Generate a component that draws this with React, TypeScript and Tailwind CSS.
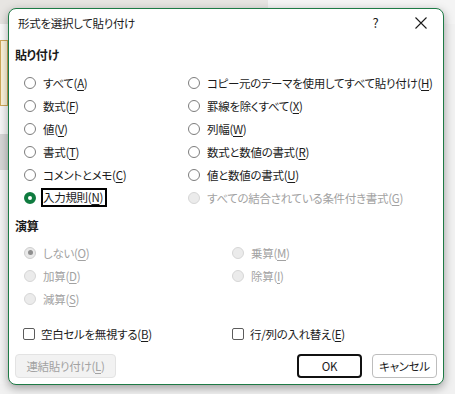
import React from 'react';

type RadioState = 'normal' | 'checked' | 'disabled' | 'disabledChecked';

type Opt = { text: string; k: string; state?: RadioState; focus?: boolean };

const Radio: React.FC<{ state: RadioState }> = ({ state }) => {
  if (state === 'checked') {
    return <span className="w-[12px] h-[12px] shrink-0 rounded-full border-[4px] border-[#0f7b3f] bg-white" />;
  }
  if (state === 'disabledChecked') {
    return (
      <span className="w-[12px] h-[12px] shrink-0 rounded-full border border-[#cfcfcf] bg-[#e9e9e9] flex items-center justify-center">
        <span className="w-[5px] h-[5px] rounded-full bg-[#8e8e8e]" />
      </span>
    );
  }
  if (state === 'disabled') {
    return <span className="w-[12px] h-[12px] shrink-0 rounded-full border border-[#d6d6d6] bg-[#ebebeb]" />;
  }
  return <span className="w-[12px] h-[12px] shrink-0 rounded-full border border-[#7d7d7d] bg-white" />;
};

const Label: React.FC<{ text: string; k: string }> = ({ text, k }) => (
  <>
    {text}(<span className="underline underline-offset-[2px]">{k}</span>)
  </>
);

const RadioRow: React.FC<{ opt: Opt }> = ({ opt }) => {
  const state = opt.state || 'normal';
  const disabled = state === 'disabled' || state === 'disabledChecked';
  return (
    <div className="flex items-center h-[23px]">
      <Radio state={state} />
      {opt.focus ? (
        <span className="ml-[5px] border-2 border-black pr-[2px] leading-[15px] text-[#1b1b1b]">
          <Label text={opt.text} k={opt.k} />
        </span>
      ) : (
        <span className={'ml-[7px] leading-[16px] whitespace-nowrap ' + (disabled ? 'text-[#a2a2a2]' : 'text-[#1b1b1b]')}>
          <Label text={opt.text} k={opt.k} />
        </span>
      )}
    </div>
  );
};

const pasteLeft: Opt[] = [
  { text: 'すべて', k: 'A' },
  { text: '数式', k: 'F' },
  { text: '値', k: 'V' },
  { text: '書式', k: 'T' },
  { text: 'コメントとメモ', k: 'C' },
  { text: '入力規則', k: 'N', state: 'checked', focus: true },
];

const pasteRight: Opt[] = [
  { text: 'コピー元のテーマを使用してすべて貼り付け', k: 'H' },
  { text: '罫線を除くすべて', k: 'X' },
  { text: '列幅', k: 'W' },
  { text: '数式と数値の書式', k: 'R' },
  { text: '値と数値の書式', k: 'U' },
  { text: 'すべての結合されている条件付き書式', k: 'G', state: 'disabled' },
];

const opLeft: Opt[] = [
  { text: 'しない', k: 'O', state: 'disabledChecked' },
  { text: '加算', k: 'D', state: 'disabled' },
  { text: '減算', k: 'S', state: 'disabled' },
];

const opRight: Opt[] = [
  { text: '乗算', k: 'M', state: 'disabled' },
  { text: '除算', k: 'I', state: 'disabled' },
];

const Check: React.FC<{ text: string; k: string }> = ({ text, k }) => (
  <div className="flex items-center h-[23px]">
    <span className="w-[12px] h-[12px] shrink-0 rounded-[2px] border border-[#5c5c5c] bg-white" />
    <span className="ml-[6px] leading-[16px] text-[#1b1b1b] whitespace-nowrap">
      <Label text={text} k={k} />
    </span>
  </div>
);

const App: React.FC = () => {
  return (
    <div className="relative w-[455px] h-[394px] overflow-hidden bg-[#f1f1f1] font-['Noto_Sans_CJK_JP',sans-serif] [font-feature-settings:'palt'] text-[11.5px] tracking-[-0.3px]">
      {/* background app behind the dialog */}
      <div className="flex h-[24px]">
        <div className="w-[268px] bg-[#e7e5e2]" />
        <div className="flex-1 bg-[#f4f4f4]" />
      </div>
      <div className="flex flex-col w-[8px]">
        <div className="h-[16px] bg-[#fafafa]" />
        <div className="h-[66px] bg-[#fbf3d9] border border-[#cfa95a]" />
        <div className="h-[28px] bg-[#f6f6f6]" />
        <div className="h-[36px] bg-[#d6d6d6]" />
        <div className="h-[214px] bg-[#f3f3f3]" />
      </div>

      {/* dialog */}
      <div className="absolute left-[8px] top-[8px] w-[436px] h-[377px] rounded-[8px] border border-[#1e7b46] bg-white shadow-[0_3px_10px_rgba(0,0,0,0.35)] flex flex-col">
        <div className="flex items-center h-[28px] pl-[9px]">
          <span className="text-[#1b1b1b] leading-[16px]">形式を選択して貼り付け</span>
          <div className="ml-auto flex">
            <div className="w-[45px] flex items-center justify-center text-[#1b1b1b] text-[13px] leading-[16px]">?</div>
            <div className="w-[45px] flex items-center justify-center">
              <svg width="12" height="12" viewBox="0 0 12 12">
                <path d="M0.5 0.5 L11.5 11.5 M11.5 0.5 L0.5 11.5" stroke="#1b1b1b" strokeWidth="1.1" />
              </svg>
            </div>
          </div>
        </div>

        <div className="mt-[9px] pl-[6px] h-[18px] leading-[18px] text-[12px] font-bold text-[#1b1b1b]">貼り付け</div>
        <div className="mt-[7px] pl-[15px] flex">
          <div className="w-[164px] flex flex-col">
            {pasteLeft.map((o) => (
              <RadioRow key={o.k} opt={o} />
            ))}
          </div>
          <div className="flex flex-col">
            {pasteRight.map((o) => (
              <RadioRow key={o.k} opt={o} />
            ))}
          </div>
        </div>

        <div className="mt-[8px] pl-[6px] h-[18px] leading-[18px] text-[12px] font-bold text-[#1b1b1b]">演算</div>
        <div className="mt-[6px] pl-[15px] flex">
          <div className="w-[208px] flex flex-col">
            {opLeft.map((o) => (
              <RadioRow key={o.k} opt={o} />
            ))}
          </div>
          <div className="flex flex-col">
            {opRight.map((o) => (
              <RadioRow key={o.k} opt={o} />
            ))}
          </div>
        </div>

        <div className="mt-[12px] pl-[14px] flex">
          <div className="w-[209px]">
            <Check text="空白セルを無視する" k="B" />
          </div>
          <Check text="行/列の入れ替え" k="E" />
        </div>

        <div className="mt-[9px] px-[6px] flex items-center">
          <button className="w-[101px] h-[24px] rounded-[4px] border border-[#e3e3e3] bg-[#f2f2f2] text-[#a2a2a2] leading-[16px]">
            連結貼り付け(<span className="underline underline-offset-[2px]">L</span>)
          </button>
          <button className="ml-auto w-[65px] h-[24px] rounded-[4px] border-2 border-[#111] bg-white text-[#1b1b1b] leading-[16px]">
            OK
          </button>
          <button className="ml-[10px] w-[65px] h-[24px] rounded-[4px] border border-[#bdbdbd] bg-white text-[#1b1b1b] leading-[16px]">
            キャンセル
          </button>
        </div>
      </div>
    </div>
  );
};

export default App;
